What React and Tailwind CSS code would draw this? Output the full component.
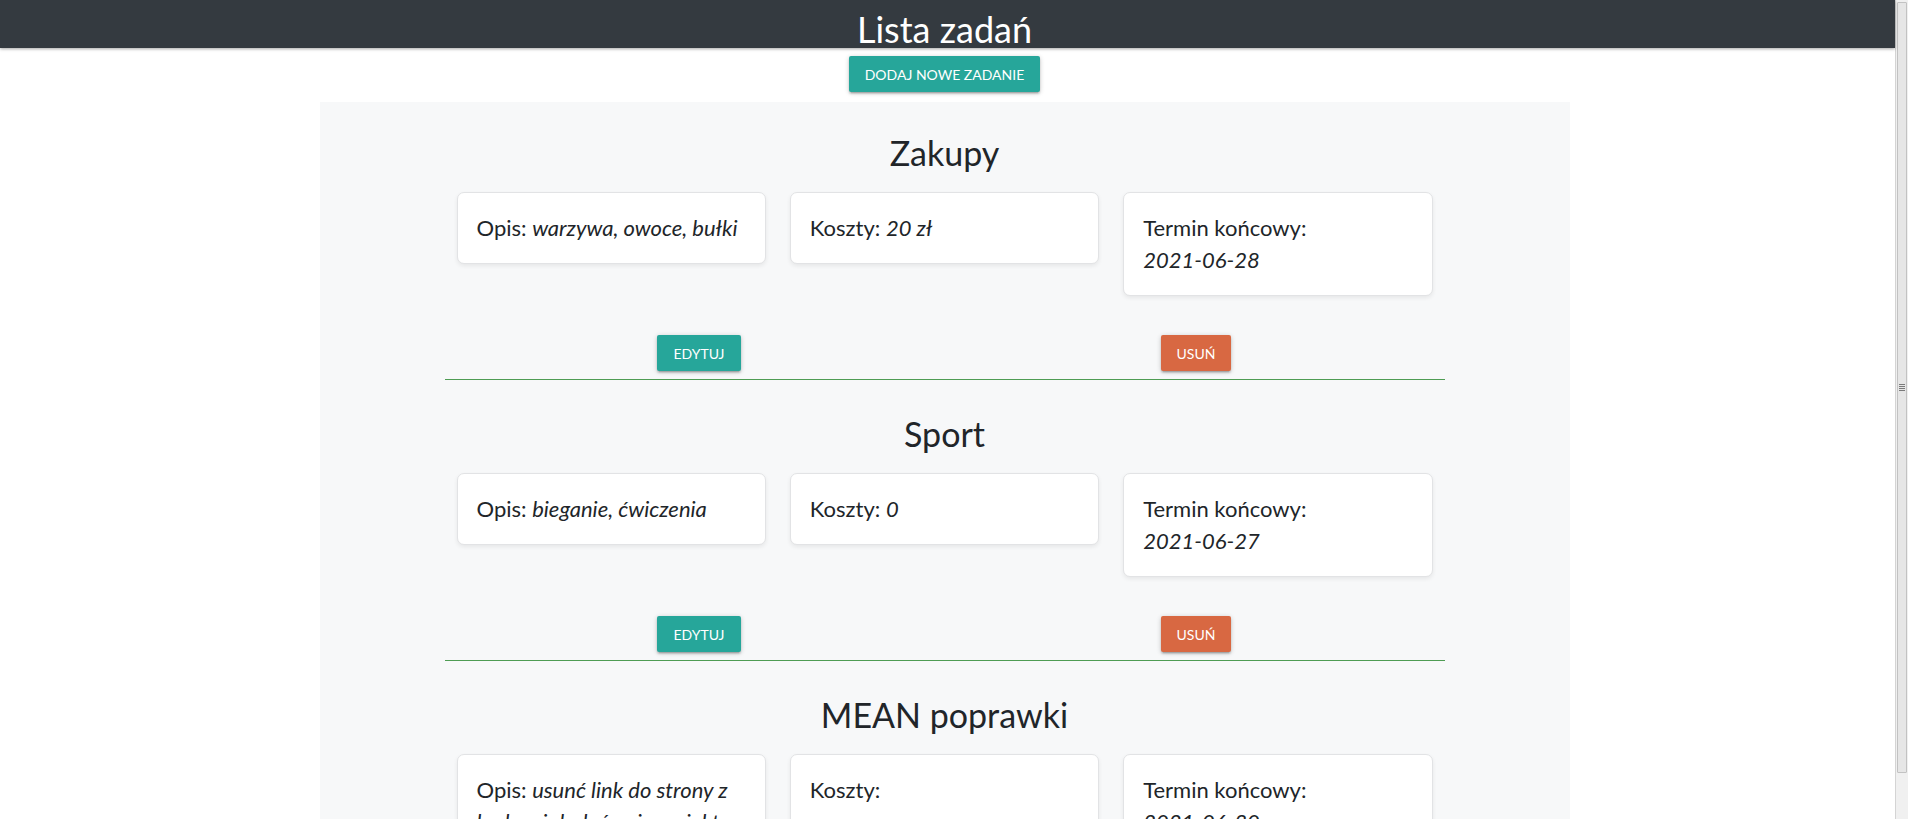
import React from 'react';

const zadania = [
  {
    tytul: 'Zakupy',
    opis: 'warzywa, owoce, bułki',
    koszty: '20 zł',
    termin: '2021-06-28',
  },
  {
    tytul: 'Sport',
    opis: 'bieganie, ćwiczenia',
    koszty: '0',
    termin: '2021-06-27',
  },
  {
    tytul: 'MEAN poprawki',
    opis: 'usunć link do strony z kodem i dodać opis projektu',
    koszty: '',
    termin: '2021-06-30',
  },
];

const cienBtn =
  'shadow-[0_2px_2px_0_rgba(0,0,0,0.14),0_3px_1px_-2px_rgba(0,0,0,0.12),0_1px_5px_0_rgba(0,0,0,0.2)]';

function Karta({ children }) {
  return (
    <div className="px-3">
      <div className="rounded-[7px] border border-[#e2e3e5] bg-white px-[19px] py-[19px] text-[22px] leading-8 shadow-[0_2px_4px_rgba(0,0,0,0.07)]">
        {children}
      </div>
    </div>
  );
}

function Zadanie({ zadanie }) {
  return (
    <section className="mx-auto w-[1000px]">
      <h2 className="mb-[19px] text-center text-[34px] leading-10">{zadanie.tytul}</h2>

      <div className="grid grid-cols-3 items-start">
        <Karta>
          Opis: <i>{zadanie.opis}</i>
        </Karta>
        <Karta>
          Koszty: <i>{zadanie.koszty}</i>
        </Karta>
        <Karta>
          Termin końcowy: <br />
          <i>{zadanie.termin}</i>
        </Karta>
      </div>

      <div className="mt-[39px] grid grid-cols-2 pl-[6px]">
        <div className="flex justify-center">
          <button className={`h-9 rounded-[2px] bg-[#26a69a] px-4 text-[14px] uppercase text-white ${cienBtn}`}>
            Edytuj
          </button>
        </div>
        <div className="flex justify-center">
          <button className={`h-9 rounded-[2px] bg-[#d86842] px-4 text-[14px] uppercase text-white ${cienBtn}`}>
            Usuń
          </button>
        </div>
      </div>

      <hr className="mt-2 border-0 border-t border-[#4e9c53]" />
    </section>
  );
}

function Suwak() {
  return (
    <div className="flex h-screen w-[13px] shrink-0 flex-col border-l border-[#d4d4d4] bg-[#f0f0f0] pt-[2px]">
      <div className="mx-[1px] flex h-[771px] items-center justify-center rounded-[1px] border border-[#c2c2c2] bg-[#e6e6e6]">
        <div className="flex flex-col gap-[1px]">
          <div className="h-px w-[6px] bg-[#7a7a7a]" />
          <div className="h-px w-[6px] bg-[#7a7a7a]" />
          <div className="h-px w-[6px] bg-[#7a7a7a]" />
          <div className="h-px w-[6px] bg-[#7a7a7a]" />
        </div>
      </div>
    </div>
  );
}

export default function App() {
  return (
    <div className="flex h-screen overflow-hidden bg-white font-['Lato','Open_Sans',sans-serif] text-[#212529]">
      <div className="flex min-w-0 flex-1 flex-col">
        <header className="relative z-10 flex h-12 shrink-0 justify-center bg-[#343a40] pr-[6px] shadow-[0_1px_3px_rgba(0,0,0,0.35)]">
          <h1 className="mt-[5px] text-[36px] leading-[48px] text-white">Lista zadań</h1>
        </header>

        <div className="flex justify-center pr-[6px] pt-2">
          <button className={`h-9 rounded-[2px] bg-[#26a69a] px-4 text-[14px] uppercase text-white ${cienBtn}`}>
            Dodaj nowe zadanie
          </button>
        </div>

        <div className="mt-[10px] flex flex-1 justify-center pr-[6px]">
          <main className="flex w-[1250px] flex-col gap-[34px] bg-[#f7f8f9] pt-[31px]">
            {zadania.map((z) => (
              <Zadanie key={z.tytul} zadanie={z} />
            ))}
          </main>
        </div>
      </div>
      <Suwak />
    </div>
  );
}
